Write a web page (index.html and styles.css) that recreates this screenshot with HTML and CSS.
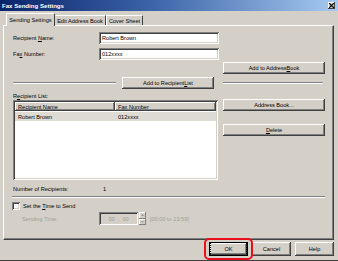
FILE: index.html
```html
<!DOCTYPE html>
<html lang="en">
<head>
    <meta charset="UTF-8">
    <title>Fax Sending Settings</title>
    <link rel="stylesheet" href="styles.css">
</head>
<body>
    <div class="dialog">
        <div class="titlebar">
            <span class="title">Fax Sending Settings</span>
            <span class="close">
                <svg width="5" height="5" viewBox="0 0 5 5"><path d="M0 0L5 5M5 0L0 5" stroke="#000" stroke-width="1.2"/></svg>
            </span>
        </div>

        <div class="tabs">
            <div class="tab tab-active">Sending Settings</div>
            <div class="tab tab-edit">Edit Address Book</div>
            <div class="tab tab-cover">Cover Sheet</div>
        </div>

        <div class="panel">
            <!-- recipient fields -->
            <div class="field">
                <span class="field-label">Recipient <u>N</u>ame:</span>
                <div class="textbox">Robert Brown</div>
            </div>
            <div class="field field-fax">
                <span class="field-label">Fa<u>x</u> Number:</span>
                <div class="textbox">012xxxx</div>
            </div>

            <div class="row-right">
                <div class="btn btn-wide">Add to Address <u>B</u>ook</div>
            </div>

            <div class="split split-add">
                <div class="col-left">
                    <div class="etched etched-left"></div>
                    <div class="btn btn-add">Add to Recipient <u>L</u>ist</div>
                </div>
                <div class="col-right">
                    <div class="etched etched-right"></div>
                </div>
            </div>

            <!-- recipient list -->
            <div class="split split-list">
                <div class="col-left">
                    <div class="list-label">R<u>e</u>cipient List:</div>
                    <div class="listview">
                        <div class="list-head">
                            <div class="col-name">Recipient Name</div>
                            <div class="col-fax">Fax Number</div>
                        </div>
                        <div class="list-row selected">
                            <div class="col-name">Robert Brown</div>
                            <div class="col-fax">012xxxx</div>
                        </div>
                    </div>
                </div>
                <div class="col-right list-buttons">
                    <div class="btn btn-wide">Address Book...</div>
                    <div class="btn btn-wide btn-delete"><u>D</u>elete</div>
                </div>
            </div>

            <div class="count">
                <span class="count-label">Number of Recipients:</span>
                <span>1</span>
            </div>

            <div class="etched etched-full"></div>

            <!-- sending time -->
            <div class="check">
                <span class="checkbox"></span>
                <span>Set the <u>T</u>ime to Send</span>
            </div>
            <div class="time-row">
                <span class="time-label">Sending Time:</span>
                <div class="timebox">00&nbsp;&nbsp;:&nbsp;&nbsp;00</div>
                <div class="spinner">
                    <div class="spin-half"><svg width="3" height="2" viewBox="0 0 3 2"><path d="M1.5 0L3 2H0Z" fill="#a09c94"/></svg></div>
                    <div class="spin-half"><svg width="3" height="2" viewBox="0 0 3 2"><path d="M0 0H3L1.5 2Z" fill="#a09c94"/></svg></div>
                </div>
                <span class="time-range">[00:00 to 23:59]</span>
            </div>
        </div>

        <div class="footer">
            <div class="ok-wrap">
                <div class="btn btn-foot btn-default"><span class="focus">OK</span></div>
                <div class="highlight"></div>
            </div>
            <div class="btn btn-foot">Cancel</div>
            <div class="btn btn-foot">Help</div>
        </div>
    </div>
</body>
</html>
```

FILE: styles.css
```css
* {
    box-sizing: border-box;
}

body {
    margin: 0;
    background: #d4d0c8;
    font-family: 'Liberation Sans', Arial, sans-serif;
    font-size: 5.6px;
    color: #000;
    overflow: hidden;
}

u {
    text-decoration: underline;
}

.dialog {
    width: 338px;
    height: 261px;
    position: relative;
    border-bottom: 1px solid #404040;
}

/* Title bar */
.titlebar {
    height: 11px;
    display: flex;
    align-items: center;
    justify-content: space-between;
    padding: 0 3px 0 2px;
    background: linear-gradient(to right, #0a246a 0%, #3c64a8 45%, #a6caf0 100%);
}

.title {
    color: #fff;
    font-weight: bold;
    font-size: 6.1px;
}

.close {
    width: 7px;
    height: 7px;
    display: flex;
    align-items: center;
    justify-content: center;
    background: #d4d0c8;
    box-shadow: inset -1px -1px #404040, inset 1px 1px #fff;
}

/* Tabs */
.tabs {
    display: flex;
    align-items: flex-end;
    padding-left: 6px;
    margin-top: 2px;
    height: 12px;
    position: relative;
    z-index: 1;
}

.tab {
    height: 10px;
    display: flex;
    align-items: center;
    justify-content: center;
    border-top: 1px solid #fff;
    border-left: 1px solid #fff;
    border-right: 1px solid #404040;
    border-top-left-radius: 1px;
    border-top-right-radius: 1px;
}

.tab-active {
    width: 49px;
    height: 13px;
    margin-bottom: -1px;
    background: #d4d0c8;
    padding-bottom: 1px;
}

.tab-edit {
    width: 51px;
    border-left: none;
}

.tab-cover {
    width: 37px;
}

/* Panel */
.panel {
    margin-left: 3px;
    width: 331px;
    height: 215px;
    padding: 6px 8px 0 9px;
    border-top: 1px solid #fff;
    border-left: 1px solid #fff;
    border-right: 1px solid #404040;
    border-bottom: 1px solid #404040;
    box-shadow: inset -1px -1px #808080;
}

.field {
    display: flex;
    align-items: center;
    height: 12px;
}

.field-fax {
    margin-top: 4px;
}

.field-label {
    width: 86px;
}

.textbox {
    width: 120px;
    height: 12px;
    padding: 0 3px;
    display: flex;
    align-items: center;
    background: #fff;
    box-shadow: inset 1px 1px #808080, inset -1px -1px #fff, inset 2px 2px #404040, inset -2px -2px #d4d0c8;
}

.btn {
    height: 12px;
    display: flex;
    align-items: center;
    justify-content: center;
    background: #d4d0c8;
    box-shadow: inset -1px -1px #404040, inset 1px 1px #fff, inset -2px -2px #808080;
}

.btn-wide {
    width: 102px;
}

.row-right {
    display: flex;
    padding-left: 210px;
    margin-top: 2px;
}

.split {
    display: flex;
    gap: 5px;
}

.col-left {
    width: 205px;
}

.col-right {
    width: 102px;
}

.split-add {
    margin-top: 3px;
    height: 12px;
}

.split-add .col-left,
.split-add .col-right {
    display: flex;
    align-items: center;
}

.etched {
    height: 2px;
    border-top: 1px solid #808080;
    border-bottom: 1px solid #fff;
}

.etched-left {
    width: 103px;
    margin-right: 6px;
}

.btn-add {
    width: 92px;
}

.etched-right {
    width: 100px;
}

/* Recipient list */
.split-list {
    margin-top: 2px;
}

.list-label {
    height: 9px;
    display: flex;
    align-items: center;
}

.listview {
    height: 80px;
    background: #fff;
    padding: 2px;
    box-shadow: inset 1px 1px #808080, inset -1px -1px #fff, inset 2px 2px #404040, inset -2px -2px #d4d0c8;
}

.list-head,
.list-row {
    display: flex;
    height: 9px;
}

.list-head div {
    display: flex;
    align-items: center;
    padding-left: 3px;
    background: #d4d0c8;
    box-shadow: inset -1px -1px #404040, inset 1px 1px #fff, inset -2px -2px #808080;
}

.list-row div {
    display: flex;
    align-items: center;
    padding-left: 3px;
}

.list-row.selected {
    background: #dedbd5;
    margin-top: 1px;
}

.col-name {
    width: 100px;
}

.col-fax {
    flex: 1;
}

.list-buttons {
    padding-top: 8px;
}

.btn-delete {
    margin-top: 13px;
}

.count {
    display: flex;
    align-items: center;
    height: 9px;
    margin-top: 4px;
}

.count-label {
    width: 90px;
}

.etched-full {
    width: 313px;
    margin: 3px 0 0 -1px;
}

/* Sending time */
.check {
    display: flex;
    align-items: center;
    gap: 1px;
    height: 8px;
    margin-top: 4px;
}

.checkbox {
    width: 8px;
    height: 8px;
    margin-left: -1px;
    margin-right: 2px;
    background: #fff;
    box-shadow: inset 1px 1px #808080, inset -1px -1px #fff, inset 2px 2px #404040, inset -2px -2px #d4d0c8;
}

.time-row {
    display: flex;
    align-items: center;
    height: 13px;
    margin-top: 2px;
    color: #a09c94;
}

.time-label {
    width: 77px;
    margin-left: 9px;
}

.timebox {
    width: 39px;
    height: 13px;
    display: flex;
    align-items: center;
    justify-content: center;
    background: #d4d0c8;
    box-shadow: inset 1px 1px #808080, inset -1px -1px #fff, inset 2px 2px #404040, inset -2px -2px #d4d0c8;
}

.spinner {
    width: 7px;
    height: 13px;
    margin-left: 1px;
    display: flex;
    flex-direction: column;
}

.spin-half {
    flex: 1;
    display: flex;
    align-items: center;
    justify-content: center;
    box-shadow: inset -1px -1px #808080, inset 1px 1px #fff;
}

.time-range {
    margin-left: 4px;
}

/* Footer buttons */
.footer {
    display: flex;
    justify-content: flex-end;
    gap: 4px;
    padding-right: 4px;
    margin-top: 2px;
}

.btn-foot {
    width: 39px;
    height: 14px;
}

.btn-default {
    border: 1px solid #000;
}

.focus {
    outline: 1px dotted #000;
    outline-offset: 2px;
    display: flex;
    width: 31px;
    height: 8px;
    align-items: center;
    justify-content: center;
}

.ok-wrap {
    position: relative;
}

.highlight {
    position: absolute;
    left: -5px;
    top: -4px;
    right: -5px;
    bottom: -4px;
    border: 2.5px solid #e8101c;
    border-radius: 5px;
}
```
